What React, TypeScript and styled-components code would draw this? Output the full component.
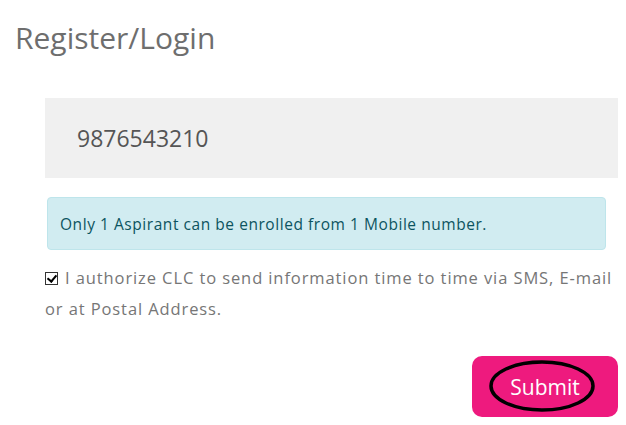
import React, { useState } from "react";
import styled, { createGlobalStyle } from "styled-components";

const GlobalStyle = createGlobalStyle`
  body {
    margin: 0;
    background: #ffffff;
    font-family: "Open Sans", "Noto Sans", sans-serif;
  }
`;

// 페이지 전체
const Page = styled.div`
  width: 626px;
  height: 425px;
  box-sizing: border-box;
  padding: 20px 8px 0 15px;
`;

const Title = styled.h2`
  margin: 0;
  font-family: "Open Sans", sans-serif;
  font-weight: 400;
  font-size: 30px;
  line-height: 36px;
  color: #6e6e6e;
`;

// 입력 폼 영역
const Form = styled.div`
  display: flex;
  flex-direction: column;
  margin: 42px 0 0 30px;
`;

const PhoneInput = styled.input`
  width: 573px;
  height: 80px;
  box-sizing: border-box;
  border: none;
  outline: none;
  background: #f0f0f0;
  padding: 0 0 0 32px;
  font-family: "Open Sans", sans-serif;
  font-size: 23px;
  color: #555555;
`;

const Alert = styled.div`
  margin: 19px 12px 0 2px;
  height: 53px;
  box-sizing: border-box;
  display: flex;
  align-items: center;
  padding: 0 0 0 12px;
  background: #d1ecf1;
  border: 1px solid #bee5eb;
  border-radius: 4px;
  color: #0c5460;
  font-size: 15.5px;
  letter-spacing: 0.55px;
`;

const Agree = styled.label`
  display: block;
  margin-top: 12px;
  font-size: 16.5px;
  line-height: 31px;
  color: #767676;
  letter-spacing: 0.9px;
`;

// 흰 바탕에 검은 체크 표시
const Check = styled.input`
  appearance: none;
  width: 13px;
  height: 13px;
  margin: 0 7px 0 0;
  vertical-align: -1px;
  border: 1px solid #333;
  background: #fff;
  position: relative;

  &:checked::after {
    content: "";
    position: absolute;
    left: 3px;
    top: 0px;
    width: 4px;
    height: 7px;
    border: solid #000;
    border-width: 0 2px 2px 0;
    transform: rotate(40deg);
  }
`;

const ButtonRow = styled.div`
  display: flex;
  justify-content: flex-end;
  margin-top: 32px;
`;

const SubmitButton = styled.button`
  position: relative;
  width: 146px;
  height: 61px;
  border: none;
  border-radius: 10px;
  background: #ee1a7e;
  color: #ffffff;
  font-family: "Open Sans", sans-serif;
  font-size: 21px;
  cursor: pointer;
`;

// 버튼 위에 그려진 검은 타원 표시
const Circle = styled.svg`
  position: absolute;
  left: 16px;
  top: 2px;
  pointer-events: none;
`;

function App() {
  const [phone, setPhone] = useState("9876543210");
  const [agree, setAgree] = useState(true);

  return (
    <Page>
      <GlobalStyle />
      <Title>Register/Login</Title>
      <Form>
        <PhoneInput value={phone} onChange={(e) => setPhone(e.target.value)} />
        <Alert>Only 1 Aspirant can be enrolled from 1 Mobile number.</Alert>
        <Agree>
          <Check
            type="checkbox"
            checked={agree}
            onChange={(e) => setAgree(e.target.checked)}
          />
          I authorize CLC to send information time to time via SMS, E&#8209;mail
          or at Postal Address.
        </Agree>
        <ButtonRow>
          <SubmitButton>
            Submit
            <Circle width="108" height="56" viewBox="0 0 108 56">
              <ellipse
                cx="54"
                cy="28"
                rx="51"
                ry="24"
                fill="none"
                stroke="#000"
                strokeWidth="3.5"
              />
            </Circle>
          </SubmitButton>
        </ButtonRow>
      </Form>
    </Page>
  );
}

export default App;
